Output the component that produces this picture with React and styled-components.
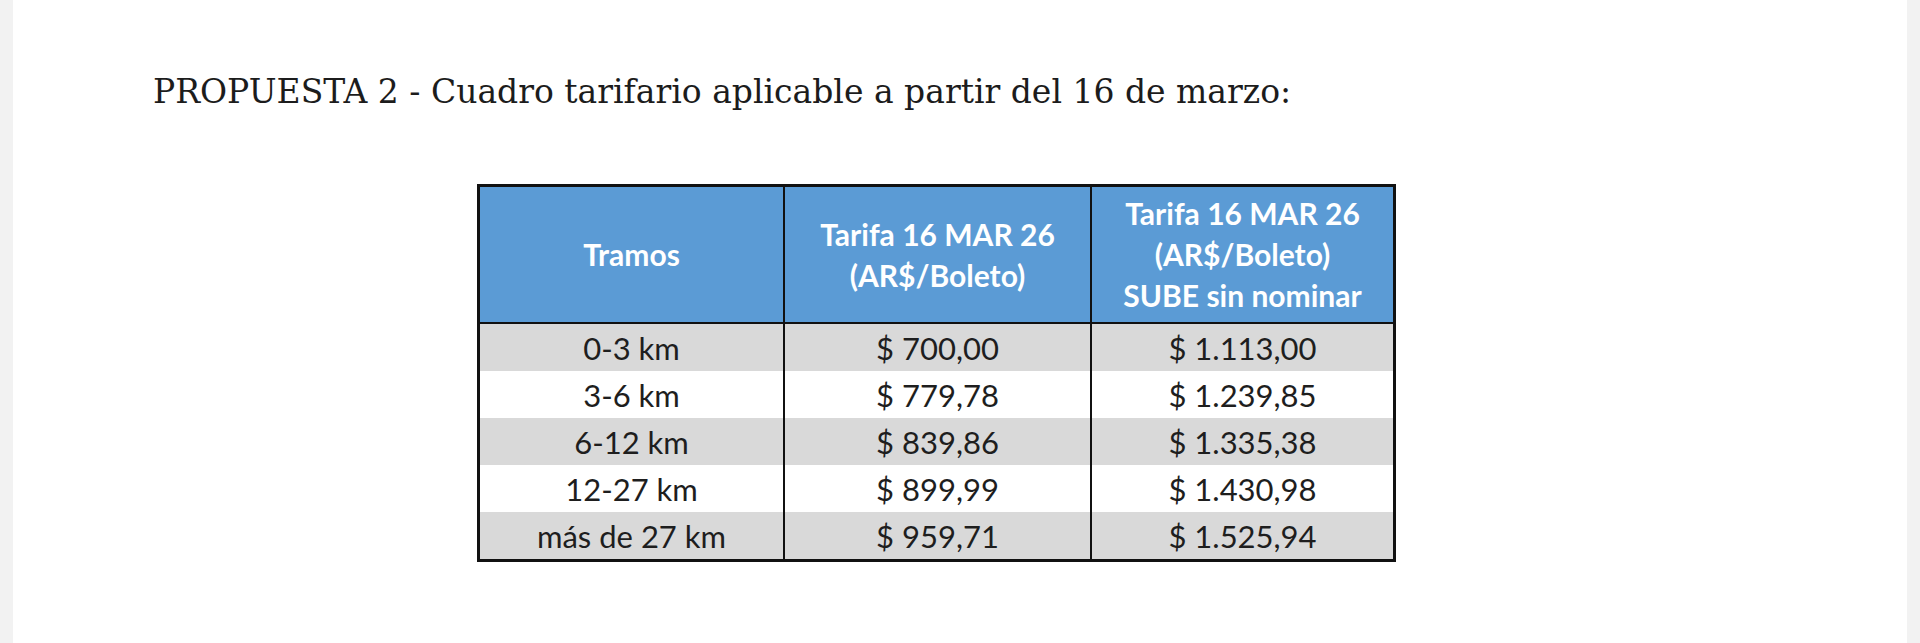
import React from 'react';
import styled, { createGlobalStyle } from 'styled-components';

const GlobalStyle = createGlobalStyle`
  html, body {
    margin: 0;
    padding: 0;
    background: #f2f2f2;
  }
`;

const Page = styled.div`
  display: flex;
  height: 643px;
  padding: 0 13px;
  box-sizing: border-box;
`;

const Sheet = styled.div`
  flex: 1;
  background: #ffffff;
  padding: 70px 0 0 140px;
`;

const Title = styled.h1`
  margin: 0;
  font-family: "DejaVu Serif", "Liberation Serif", serif;
  font-weight: 400;
  font-size: 33px;
  line-height: 44px;
  color: #1c1c1c;
`;

const Table = styled.table`
  margin: 70px 0 0 324px;
  border-collapse: collapse;
  border: 3px solid #111;
  font-family: Lato, "Open Sans", sans-serif;
  color: #1e1e1e;
`;

const HeadCell = styled.th`
  width: ${(p) => p.$width}px;
  height: 135px;
  padding: 0;
  background: #5b9bd5;
  color: #ffffff;
  font-weight: 700;
  font-size: 30px;
  line-height: 41px;
  text-align: center;
  vertical-align: middle;
  border: 2px solid #111;
`;

const Row = styled.tr`
  background: ${(p) => (p.$shaded ? '#d9d9d9' : '#ffffff')};
`;

const Cell = styled.td`
  height: 47px;
  padding: 0;
  font-size: 31px;
  text-align: center;
  vertical-align: middle;
  border-left: 2px solid #111;
  border-right: 2px solid #111;
`;

const rows = [
  ['0-3 km', '$ 700,00', '$ 1.113,00'],
  ['3-6 km', '$ 779,78', '$ 1.239,85'],
  ['6-12 km', '$ 839,86', '$ 1.335,38'],
  ['12-27 km', '$ 899,99', '$ 1.430,98'],
  ['más de 27 km', '$ 959,71', '$ 1.525,94'],
];

const App = () => {
  return (
    <>
      <GlobalStyle />
      <Page>
        <Sheet>
          <Title>PROPUESTA 2 - Cuadro tarifario aplicable a partir del 16 de marzo:</Title>
          <Table>
            <thead>
              <tr>
                <HeadCell $width={303}>Tramos</HeadCell>
                <HeadCell $width={305}>
                  Tarifa 16 MAR 26
                  <br />
                  (AR$/Boleto)
                </HeadCell>
                <HeadCell $width={301}>
                  Tarifa 16 MAR 26
                  <br />
                  (AR$/Boleto)
                  <br />
                  SUBE sin nominar
                </HeadCell>
              </tr>
            </thead>
            <tbody>
              {rows.map((r, i) => (
                <Row key={r[0]} $shaded={i % 2 === 0}>
                  {r.map((c) => (
                    <Cell key={c}>{c}</Cell>
                  ))}
                </Row>
              ))}
            </tbody>
          </Table>
        </Sheet>
      </Page>
    </>
  );
};

export default App;
